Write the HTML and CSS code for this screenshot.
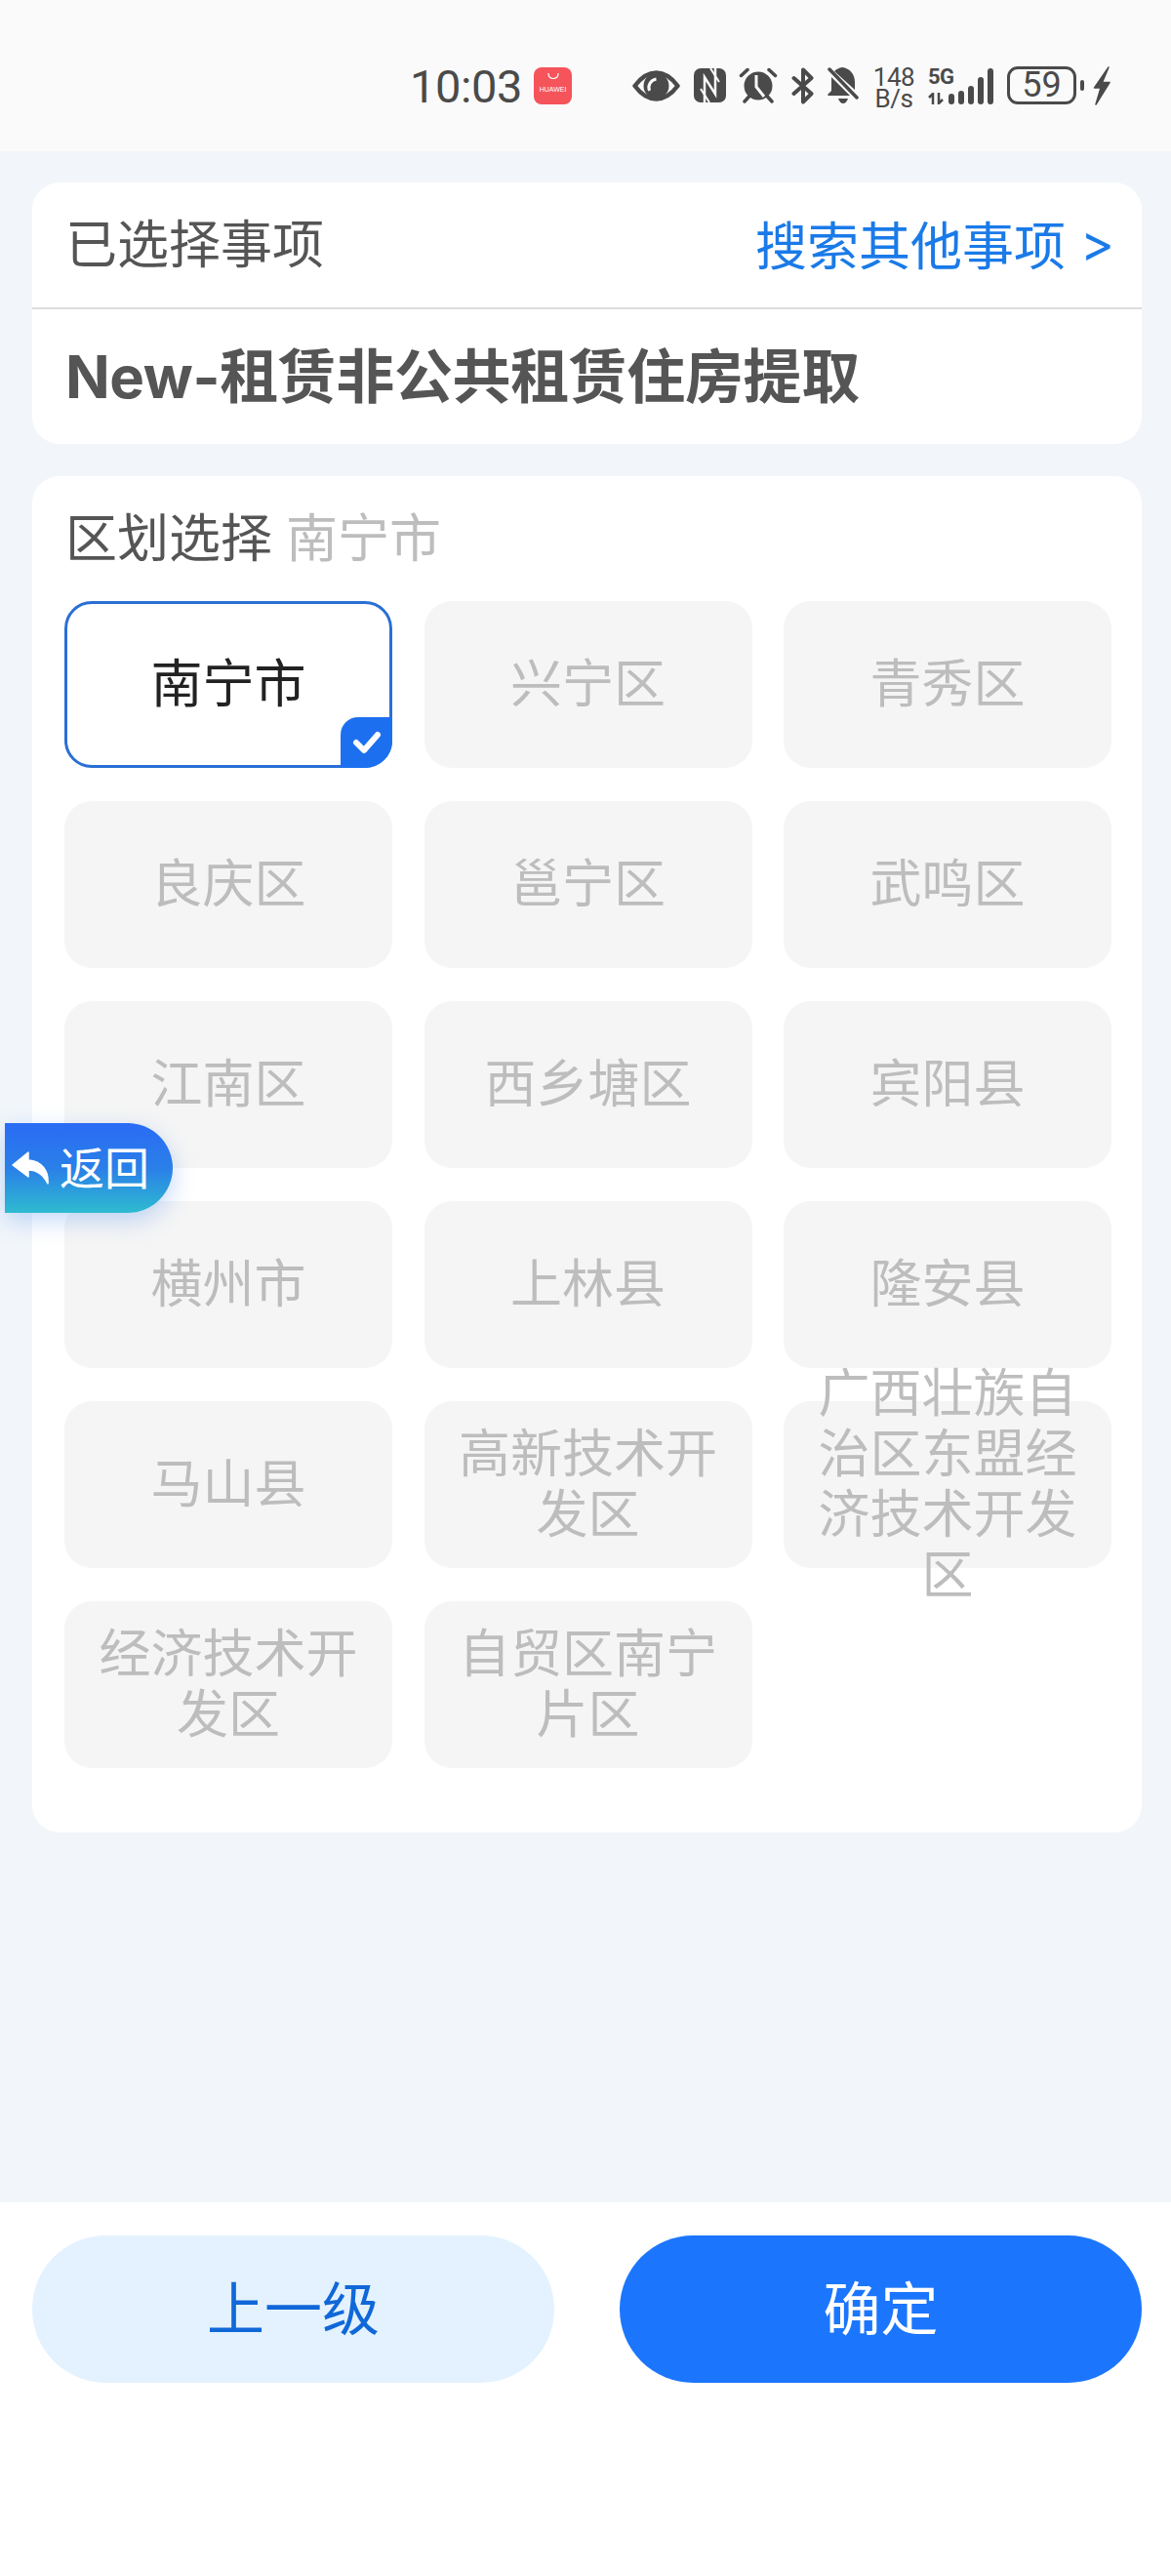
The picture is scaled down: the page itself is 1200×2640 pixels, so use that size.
FILE: index.html
```html
<!DOCTYPE html>
<html lang="zh-CN">
<head>
  <meta charset="UTF-8">
  <meta name="viewport" content="width=device-width, initial-scale=1">
  <title>区划选择</title>
  <link rel="stylesheet" href="styles.css">
</head>
<body>

<div class="page">

  <!-- Status bar -->
  <div class="statusbar">
    <span class="time">10:03</span>
    <div class="store-icon">
      <svg class="store-handle" width="14" height="8" viewBox="0 0 14 8"><path d="M2 1c0 3.500 2 5.500 5 5.500s5-2 5-5.500" fill="none" stroke="#fff" stroke-width="1.200"/></svg>
      <span class="store-name">HUAWEI</span>
    </div>

    <svg class="icon icon-eye" width="49" height="32" viewBox="0 0 49 32">
      <path d="M2.500 16C10 6 17 2.500 24.500 2.500S39 6 46.500 16C39 26 32 29.500 24.500 29.500S10 26 2.500 16Z" fill="none" stroke="#4a4a4a" stroke-width="4.500" stroke-linejoin="round"/>
      <circle cx="24.500" cy="16" r="13" fill="#4a4a4a"/>
      <path d="M17.500 21c-2-5 1-11 7-12" fill="none" stroke="#fafafa" stroke-width="3"/>
    </svg>
    <svg class="icon icon-nfc" width="33" height="35" viewBox="0 0 33 35">
      <rect width="33" height="35" rx="7" fill="#4a4a4a"/>
      <path d="M11 35V9L22 26.500V0" fill="none" stroke="#fafafa" stroke-width="2.500"/>
      <path d="M17 0 26 14M7 21 16 35" fill="none" stroke="#fafafa" stroke-width="2"/>
    </svg>
    <svg class="icon icon-alarm" width="40" height="37" viewBox="0 0 40 37">
      <circle cx="20" cy="19" r="14.500" fill="#4a4a4a"/>
      <path d="M18 8v12l8 10" fill="none" stroke="#fafafa" stroke-width="3"/>
      <path d="M2.500 8.500 9 2.500M37.500 8.500 31 2.500M6 35l4.500-5M34 35l-4.500-5" fill="none" stroke="#4a4a4a" stroke-width="3.500" stroke-linecap="round"/>
    </svg>
    <svg class="icon icon-bt" width="23" height="38" viewBox="0 0 23 38">
      <path d="M2.500 11 20.500 27 12 35.500V2.500L20.500 11 2.500 27" fill="none" stroke="#4a4a4a" stroke-width="4" stroke-linecap="round" stroke-linejoin="round"/>
    </svg>
    <svg class="icon icon-bell" width="32" height="37" viewBox="0 0 32 37">
      <path d="M15 0c8 1 13 7 13 15v8L7 4c2-2 5-3.500 8-4ZM4 10l19 19H1c-1 0-1-1.500 0-2l3-3Z" fill="#4a4a4a"/>
      <path d="M11 32h10c-1 3-3 5-5 5s-4-2-5-5Z" fill="#4a4a4a"/>
      <path d="M2 2l28 29" fill="none" stroke="#4a4a4a" stroke-width="3.500" stroke-linecap="round"/>
    </svg>

    <div class="speed"><span>148</span><span>B/s</span></div>

    <div class="signal">
      <div class="signal-left">
        <span class="net">5G</span>
        <svg width="17" height="12" viewBox="0 0 17 12"><path d="M5 12V1L1 5M11 0v11l4-4" fill="none" stroke="#4a4a4a" stroke-width="2.500"/></svg>
      </div>
      <div class="bars">
        <i class="bar bar1"></i>
        <i class="bar bar2"></i>
        <i class="bar bar3"></i>
        <i class="bar bar4"></i>
        <i class="bar bar5"></i>
      </div>
    </div>

    <div class="battery">59</div>
    <i class="battery-nub"></i>
    <svg class="icon icon-bolt" width="18" height="40" viewBox="0 0 18 40">
      <path d="M16 1 1.500 22H8L3 39 17 16.500H9.500Z" fill="#4a4a4a" stroke="#4a4a4a" stroke-width="1.500" stroke-linejoin="round"/>
    </svg>
  </div>

  <!-- Main Content -->
  <div class="main-content">
    <div class="card">
      <div class="card-head">
        <span class="card-label">已选择事项</span>
        <a href="#" class="search-link">搜索其他事项 <span class="search-arrow">&gt;</span></a>
      </div>
      <div class="card-title">New-租赁非公共租赁住房提取</div>
    </div>

    <div class="card area-card">
      <div class="area-head">区划选择<span class="area-current">南宁市</span></div>
      <div class="area-grid">
        <div class="tile tile-active">南宁市
          <span class="tile-check">
            <svg width="30" height="26" viewBox="0 0 30 26"><path d="M4 13l8 8L26 5" fill="none" stroke="#fff" stroke-width="6" stroke-linecap="round" stroke-linejoin="round"/></svg>
          </span>
        </div>
        <div class="tile">兴宁区</div>
        <div class="tile">青秀区</div>
        <div class="tile">良庆区</div>
        <div class="tile">邕宁区</div>
        <div class="tile">武鸣区</div>
        <div class="tile">江南区</div>
        <div class="tile">西乡塘区</div>
        <div class="tile">宾阳县</div>
        <div class="tile">横州市</div>
        <div class="tile">上林县</div>
        <div class="tile">隆安县</div>
        <div class="tile">马山县</div>
        <div class="tile">高新技术开发区</div>
        <div class="tile">广西壮族自治区东盟经济技术开发区</div>
        <div class="tile">经济技术开发区</div>
        <div class="tile">自贸区南宁片区</div>
      </div>
    </div>
  </div>

  <!-- Bottom buttons -->
  <div class="bottom-bar">
    <button class="btn btn-prev">上一级</button>
    <button class="btn btn-ok">确定</button>
  </div>

  <!-- Floating back button -->
  <a href="#" class="back-btn">
    <svg width="40" height="36" viewBox="0 0 40 36"><path d="M17 2 1 15l16 12v-7c9 0 15 4 20 14 1-13-6-23-20-24Z" fill="#fff" stroke="#fff" stroke-width="1.500" stroke-linejoin="round"/></svg>
    <span>返回</span>
  </a>

</div>

</body>
</html>
```

FILE: styles.css
```css
* {
  margin: 0;
  padding: 0;
  box-sizing: border-box;
}
body {
  font-family: Inter, "Noto Sans CJK SC", sans-serif;
  background-color: #f2f6fa;
}
.page {
  position: relative;
  width: 1200px;
  height: 2640px;
  display: flex;
  flex-direction: column;
  overflow: hidden;
}

/* Status bar */
.statusbar {
  height: 155px;
  flex-shrink: 0;
  background-color: #fafafa;
  padding: 68px 0 0 420px;
  display: flex;
  align-items: flex-start;
  color: #4a4a4a;
}
.time {
  width: 115px;
  font-family: Roboto, sans-serif;
  font-size: 47px;
  line-height: 42px;
  letter-spacing: -0.4px;
  margin-right: 12px;
  white-space: nowrap;
}
.store-icon {
  width: 39px;
  height: 38px;
  margin-top: 1px;
  margin-right: 62px;
  background-color: #f4545a;
  border-radius: 8px;
  display: flex;
  flex-direction: column;
  align-items: center;
  padding-top: 5px;
  color: white;
}
.store-handle {
  display: block;
}
.store-name {
  font-family: "Liberation Sans", sans-serif;
  font-size: 7px;
  line-height: 9px;
  margin-top: 5px;
}
.icon {
  display: block;
  flex-shrink: 0;
}
.icon-eye {
  margin-top: 4px;
  margin-right: 14px;
}
.icon-nfc {
  margin-top: 2px;
  margin-right: 13px;
}
.icon-alarm {
  margin-top: 1px;
  margin-right: 14px;
}
.icon-bt {
  margin-top: 1px;
  margin-right: 14px;
}
.icon-bell {
  margin-top: 1px;
  margin-right: 16px;
}
.speed {
  width: 40px;
  margin-right: 15px;
  font-family: Roboto, sans-serif;
  font-size: 26px;
  line-height: 22px;
  display: flex;
  flex-direction: column;
  align-items: center;
  letter-spacing: -0.5px;
}
.signal {
  width: 66px;
  height: 38px;
  margin-top: 1px;
  margin-right: 15px;
  display: flex;
  justify-content: space-between;
}
.signal-left {
  display: flex;
  flex-direction: column;
  justify-content: space-between;
  width: 24px;
}
.net {
  font-family: Roboto, sans-serif;
  font-weight: 700;
  font-size: 22px;
  line-height: 20px;
  letter-spacing: -0.5px;
}
.bars {
  display: flex;
  align-items: flex-end;
  gap: 4px;
  margin-left: -3px;
}
.bar {
  display: block;
  width: 6px;
  background-color: #4a4a4a;
  border-radius: 3px;
}
.bar1 { height: 11px; }
.bar2 { height: 14px; }
.bar3 { height: 19px; }
.bar4 { height: 28px; }
.bar5 { height: 37px; }
.battery {
  width: 71px;
  height: 39px;
  border: 3px solid #4a4a4a;
  border-radius: 11px;
  font-family: Roboto, sans-serif;
  font-size: 36px;
  line-height: 33px;
  text-align: center;
  margin-right: 4px;
}
.battery-nub {
  display: block;
  width: 4px;
  height: 11px;
  margin-top: 14px;
  margin-right: 9px;
  background-color: #4a4a4a;
  border-radius: 2px;
}

/* Main content */
.main-content {
  flex: 1;
  padding: 32px 30px 0 33px;
  display: flex;
  flex-direction: column;
  gap: 33px;
}
.card {
  background-color: white;
  border-radius: 28px;
}
.card-head {
  height: 130px;
  padding: 0 28px 0 34px;
  display: flex;
  align-items: center;
  justify-content: space-between;
  border-bottom: 2px solid #dcdcdc;
}
.card-label {
  font-size: 53px;
  line-height: 62px;
  color: #555;
}
.search-link {
  font-size: 53px;
  line-height: 62px;
  color: #1a7ae8;
  text-decoration: none;
}
.search-arrow {
  vertical-align: 4px;
}
.card-title {
  height: 138px;
  padding: 0 34px;
  display: flex;
  align-items: center;
  font-size: 60px;
  line-height: 70px;
  font-weight: bold;
  letter-spacing: -0.4px;
  color: #555;
  white-space: nowrap;
}
.area-card {
  padding: 33px 33px 66px;
}
.area-head {
  height: 62px;
  margin-bottom: 33px;
  padding-left: 1px;
  font-size: 53px;
  line-height: 62px;
  color: #555;
}
.area-current {
  margin-left: 14px;
  color: #bdbdbd;
}
.area-grid {
  display: grid;
  grid-template-columns: repeat(3, 336px);
  grid-auto-rows: 171px;
  column-gap: 32.500px;
  row-gap: 34px;
}
.tile {
  position: relative;
  padding: 0 30px 2px;
  display: flex;
  align-items: center;
  justify-content: center;
  text-align: center;
  font-size: 53px;
  line-height: 62px;
  color: #bdbdbd;
  background-color: #f5f5f5;
  border-radius: 28px;
}
.tile-active {
  color: #222;
  background-color: white;
  border: 3px solid #2a6fd6;
}
.tile-check {
  position: absolute;
  right: -3px;
  bottom: -3px;
  width: 53px;
  height: 52px;
  display: flex;
  align-items: center;
  justify-content: center;
  background-color: #1c70f0;
  border-radius: 18px 0 28px 0;
}

/* Bottom buttons */
.bottom-bar {
  height: 383px;
  flex-shrink: 0;
  background-color: white;
  padding: 34px 30px 0 33px;
  display: flex;
  justify-content: space-between;
  align-items: flex-start;
}
.btn {
  width: 535px;
  height: 151px;
  border: none;
  border-radius: 76px;
  font-family: inherit;
  font-size: 59px;
  line-height: 70px;
}
.btn-prev {
  background-color: #e3f2fe;
  color: #1068d8;
}
.btn-ok {
  background-color: #1b76fd;
  color: white;
}

/* Floating back button */
.back-btn {
  position: absolute;
  left: 5px;
  top: 1151px;
  width: 172px;
  height: 92px;
  padding-left: 7px;
  display: flex;
  align-items: center;
  gap: 9px;
  font-size: 46px;
  line-height: 54px;
  color: white;
  text-decoration: none;
  background: linear-gradient(180deg, #2a6cf5 0%, #2a7fe8 50%, #2ebbd0 100%);
  border-radius: 0 46px 46px 0;
  box-shadow: 0 8px 24px rgba(60, 130, 240, 0.3);
}
```
